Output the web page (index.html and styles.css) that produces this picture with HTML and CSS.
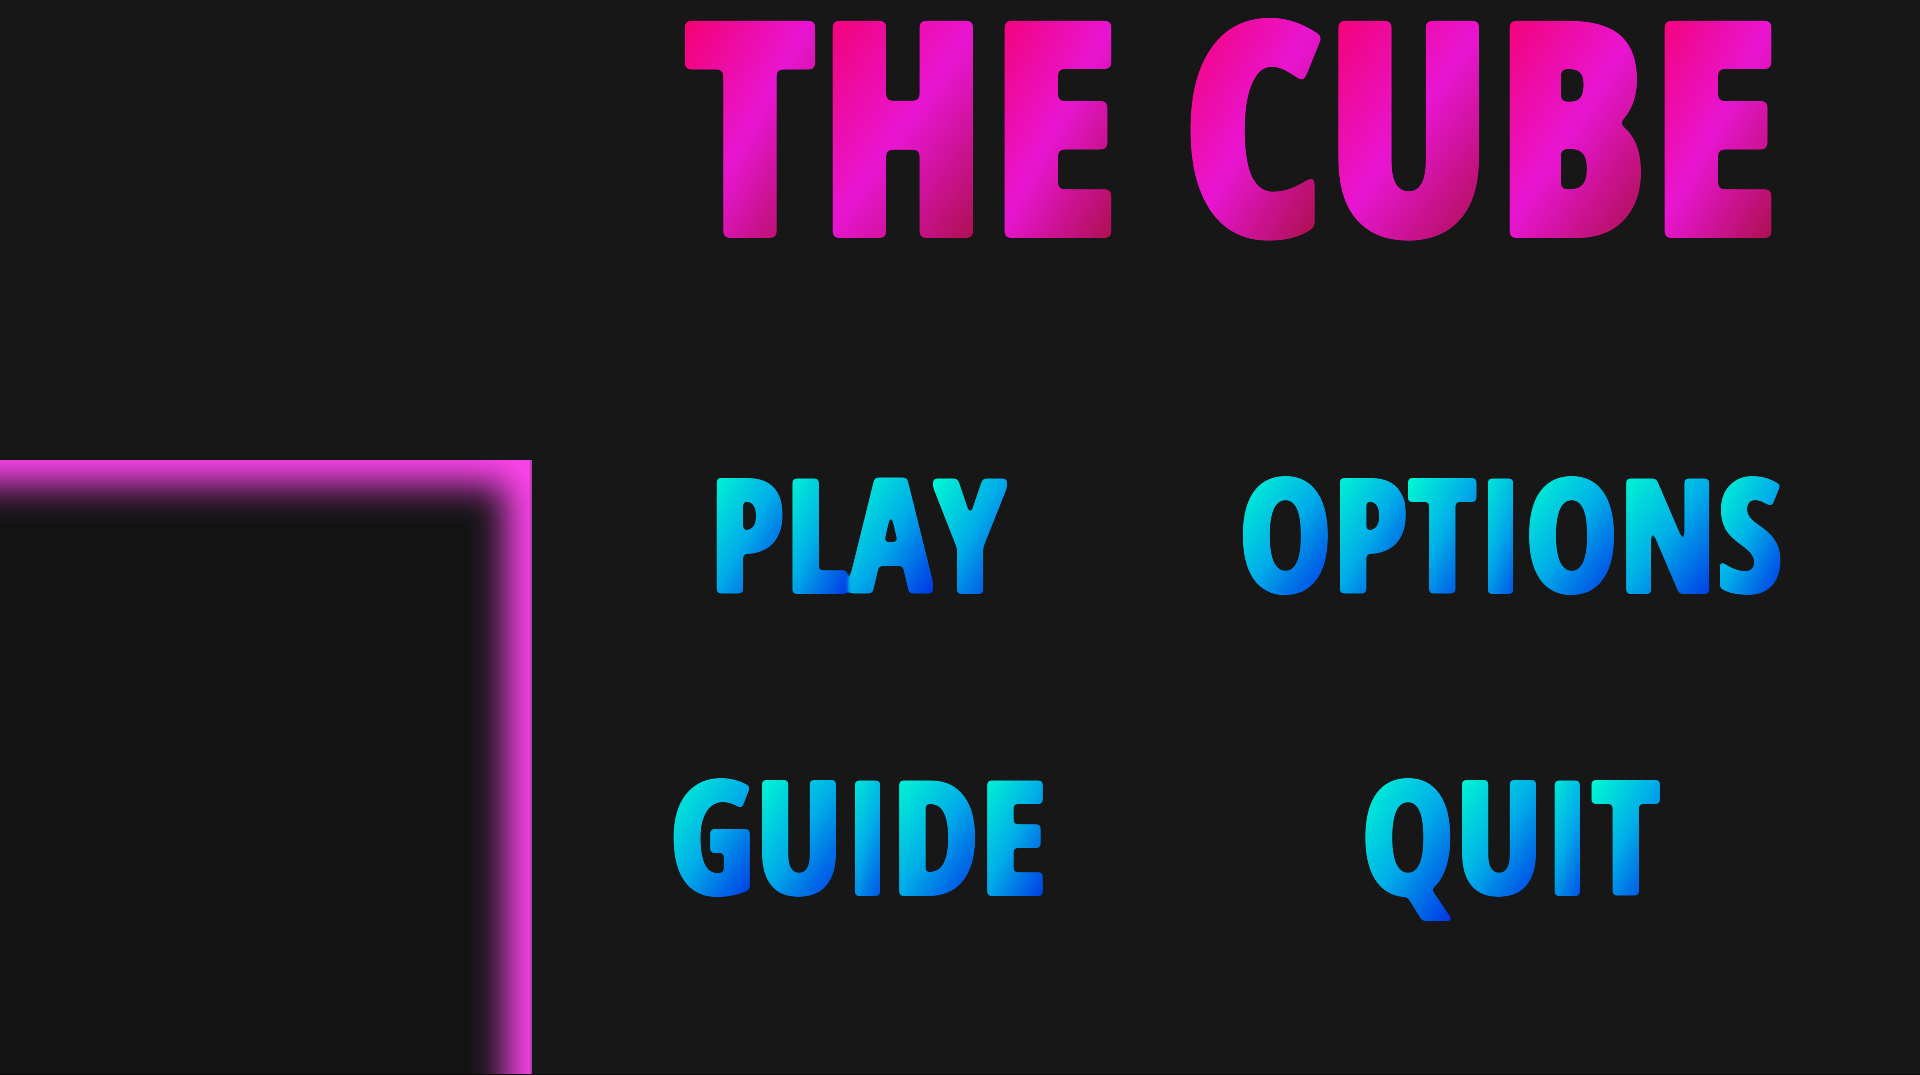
FILE: index.html
```html
<!DOCTYPE html>
<html lang="en">
<head>
<meta charset="utf-8">
<meta name="viewport" content="width=device-width, initial-scale=1">
<title>The Cube</title>
<link rel="stylesheet" href="styles.css">
</head>
<body>
<svg class="defs" width="0" height="0" aria-hidden="true">
  <filter id="round-lg" x="-5%" y="-5%" width="110%" height="110%" color-interpolation-filters="sRGB">
    <feGaussianBlur stdDeviation="3"/>
    <feColorMatrix values="1 0 0 0 0  0 1 0 0 0  0 0 1 0 0  0 0 0 12 -5.5"/>
  </filter>
  <filter id="round-sm" x="-5%" y="-5%" width="110%" height="125%" color-interpolation-filters="sRGB">
    <feGaussianBlur stdDeviation="2"/>
    <feColorMatrix values="1 0 0 0 0  0 1 0 0 0  0 0 1 0 0  0 0 0 8 -3.5"/>
  </filter>
</svg>
<div class="screen">
  <div class="stage"><div class="cube-face"></div></div>
  <main class="panel">
    <h1 class="title"><span class="word"><span>T</span><span>H</span><span>E</span></span> <span class="word"><span>C</span><span>U</span><span>B</span><span>E</span></span></h1>
    <nav class="menu">
      <button type="button" class="item"><span>P</span><span>L</span><span>A</span><span>Y</span></button>
      <button type="button" class="item"><span>O</span><span>P</span><span>T</span><span>I</span><span>O</span><span>N</span><span>S</span></button>
      <button type="button" class="item"><span>G</span><span>U</span><span>I</span><span>D</span><span>E</span></button>
      <button type="button" class="item"><span class="tail">Q</span><span>U</span><span>I</span><span>T</span></button>
    </nav>
  </main>
</div>
</body>
</html>
```
FILE: styles.css
```css
* { box-sizing: border-box; }

body {
  margin: 0;
  background: #171717;
  font-family: "Open Sans Condensed", "Roboto Condensed", "Open Sans", sans-serif;
  font-weight: 700;
}

.defs { position: absolute; }

.screen {
  display: grid;
  grid-template-columns: 532fr 1388fr;
  min-height: 100vh;
  border-bottom: 1px solid #0c0a0a;
}

.stage {
  display: flex;
  overflow: hidden;
  padding-top: 460px;
}

/* The face runs off the left and bottom edges of the screen. */
.cube-face {
  flex: 1;
  margin: 0 0 -80px -80px;
  background: #141414;
  border-right: 2px solid #bf3bb3;
  box-shadow: inset 0 0 36px 24px #ff45ee;
}

.panel { padding-top: 9px; }

.title {
  display: flex;
  justify-content: center;
  gap: 60px;
  margin: 0;
  padding-left: 12px;
  font-size: 282px;
  line-height: 224px;
  filter: url(#round-lg);
}

.word { display: flex; }

.word span,
.item span {
  color: transparent;
  -webkit-background-clip: text;
  background-clip: text;
}

.word span {
  padding: 0 6px 16px;
  background-image: linear-gradient(to bottom right, #f5006c, #e815d2 50%, #a50f40);
  -webkit-text-stroke: 16px transparent;
}

.menu {
  display: grid;
  grid-template-columns: 1fr 1fr;
  row-gap: 174px;
  margin-top: 222px;
  padding: 0 6% 0 0;
}

.item {
  display: flex;
  justify-content: center;
  align-items: flex-start;
  height: 128px;
  padding: 0;
  border: 0;
  background: none;
  font: inherit;
  font-size: 154px;
  line-height: 120px;
  cursor: pointer;
  filter: url(#round-sm);
}

.item span {
  padding: 0 1px 8px;
  background-image: linear-gradient(to bottom right, #00ffd0, #00aee8 50%, #0030e6);
  -webkit-text-stroke: 6px transparent;
}

.item .tail { padding-bottom: 28px; }
```
